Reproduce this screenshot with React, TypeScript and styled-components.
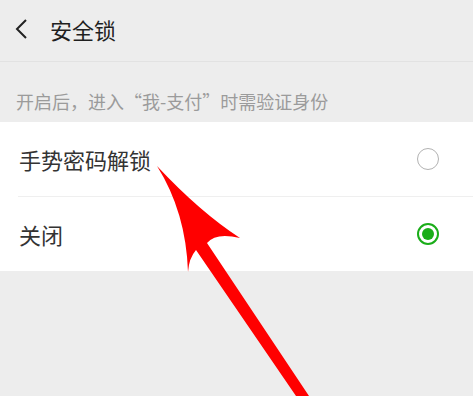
import React, { useState } from "react";
import styled, { createGlobalStyle } from "styled-components";

const GlobalStyle = createGlobalStyle`
  html, body {
    margin: 0;
    padding: 0;
    background: #ededed;
    font-family: "Noto Sans CJK SC", "Noto Sans", sans-serif;
  }
`;

interface Option {
  id: string;
  label: string;
}

const options: Option[] = [
  { id: "gesture", label: "手势密码解锁" },
  { id: "off", label: "关闭" },
];

const App = () => {
  const [selected, setSelected] = useState("off");

  return (
    <Page>
      <GlobalStyle />
      <Header>
        <BackIcon width="14" height="22" viewBox="0 0 14 22">
          <polyline points="11,2 2,11 11,20" fill="none" stroke="#222" strokeWidth="2" />
        </BackIcon>
        <Title>安全锁</Title>
      </Header>
      <Hint>开启后，进入“我-支付”时需验证身份</Hint>
      <List>
        {options.map((o) => (
          <Row key={o.id} onClick={() => setSelected(o.id)}>
            <Label>{o.label}</Label>
            <Radio checked={selected === o.id} />
          </Row>
        ))}
      </List>
      <Arrow width="473" height="396" viewBox="0 0 473 396">
        <path
          d="M157,166 Q200,212 240,238 Q216,232 207,243 L309,396 L296,396 L196,250 Q189,258 188,272 Q186,212 157,166 Z"
          fill="#ff0000"
        />
      </Arrow>
    </Page>
  );
};

export default App;

const Page = styled.div`
  position: relative;
  width: 473px;
  height: 396px;
  overflow: hidden;
  background: #ededed;
`;

const Header = styled.div`
  height: 62px;
  display: flex;
  align-items: center;
  padding: 0 0 3px 15px;
  border-bottom: 1px solid #e2e2e2;
  box-sizing: border-box;
`;

const BackIcon = styled.svg`
  margin-right: 21px;
`;

const Title = styled.div`
  font-size: 22px;
  color: #1f1f1f;
`;

const Hint = styled.div`
  height: 60px;
  display: flex;
  align-items: flex-end;
  padding: 0 0 8px 16px;
  box-sizing: border-box;
  font-size: 18px;
  line-height: 26px;
  color: #9b9b9b;
`;

const List = styled.div`
  background: #fff;
`;

const Row = styled.div`
  height: 74px;
  display: flex;
  align-items: center;
  justify-content: space-between;
  padding: 0 34px 0 19px;
  position: relative;
  & + & {
    border-top: 1px solid #efefef;
    margin-left: 18px;
    padding-left: 1px;
  }
`;

const Label = styled.div`
  font-size: 22px;
  color: #333;
`;

const Radio = styled.div<{ checked: boolean }>`
  width: 22px;
  height: 22px;
  box-sizing: border-box;
  border-radius: 50%;
  border: ${(p) => (p.checked ? "2px solid #1aad19" : "1.5px solid #b2b2b2")};
  display: flex;
  align-items: center;
  justify-content: center;
  &::after {
    content: "";
    width: 12px;
    height: 12px;
    border-radius: 50%;
    background: #1aad19;
    display: ${(p) => (p.checked ? "block" : "none")};
  }
`;

const Arrow = styled.svg`
  position: absolute;
  left: 0;
  top: 0;
  pointer-events: none;
`;
